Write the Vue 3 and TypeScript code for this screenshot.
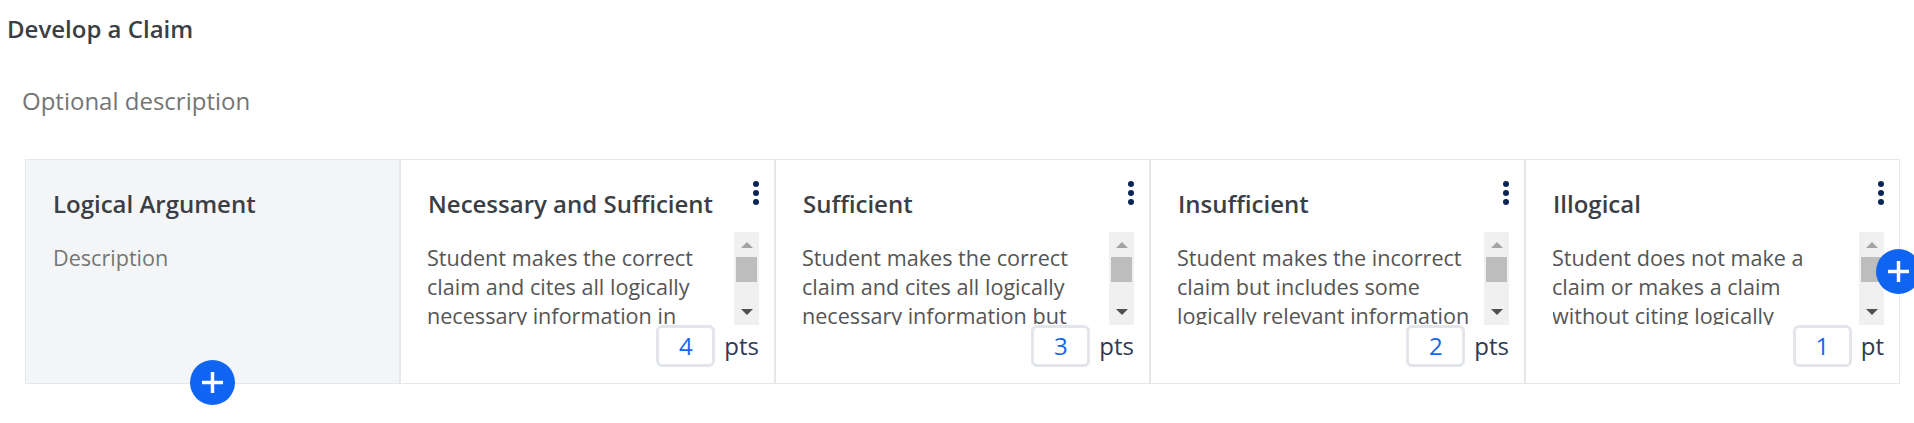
<script setup lang="ts">
interface Level {
  title: string
  text: string
  points: number
  unit: string
}

const levels: Level[] = [
  {
    title: 'Necessary and Sufficient',
    text: 'Student makes the correct claim and cites all logically necessary information in',
    points: 4,
    unit: 'pts',
  },
  {
    title: 'Sufficient',
    text: 'Student makes the correct claim and cites all logically necessary information but',
    points: 3,
    unit: 'pts',
  },
  {
    title: 'Insufficient',
    text: 'Student makes the incorrect claim but includes some logically relevant information',
    points: 2,
    unit: 'pts',
  },
  {
    title: 'Illogical',
    text: 'Student does not make a claim or makes a claim without citing logically',
    points: 1,
    unit: 'pt',
  },
]
</script>

<template>
  <main class="page">
    <h1 class="title">Develop a Claim</h1>
    <p class="optional">Optional description</p>

    <section class="rubric">
      <div class="cell criterion">
        <h2 class="heading">Logical Argument</h2>
        <p class="desc">Description</p>
        <button class="add add-row" type="button" aria-label="Add row">
          <svg viewBox="0 0 24 24" class="plus"><path d="M12 1v22M1 12h22" /></svg>
        </button>
      </div>

      <div v-for="level in levels" :key="level.title" class="cell level">
        <div class="head">
          <h2 class="heading">{{ level.title }}</h2>
          <svg class="kebab" viewBox="0 0 6 24" aria-hidden="true">
            <circle cx="3" cy="3" r="3" />
            <circle cx="3" cy="12" r="3" />
            <circle cx="3" cy="21" r="3" />
          </svg>
        </div>

        <div class="body">
          <p class="text">{{ level.text }}</p>
          <div class="scrollbar" aria-hidden="true">
            <svg class="arrow up" viewBox="0 0 12 6"><path d="M0 6 6 0l6 6z" /></svg>
            <div class="thumb"></div>
            <svg class="arrow down" viewBox="0 0 12 6"><path d="M0 0h12L6 6z" /></svg>
          </div>
        </div>

        <div class="score">
          <div class="points">{{ level.points }}</div>
          <span class="unit">{{ level.unit }}</span>
        </div>
      </div>

      <button class="add add-col" type="button" aria-label="Add column">
        <svg viewBox="0 0 24 24" class="plus"><path d="M12 1v22M1 12h22" /></svg>
      </button>
    </section>
  </main>
</template>

<style scoped>
.page {
  font-family: "Open Sans", "Noto Sans", sans-serif;
  width: 1914px;
  height: 423px;
  overflow: hidden;
  box-sizing: border-box;
  padding: 14px 0 0 7px;
  color: #3b3f45;
}

.title {
  margin: 0;
  font-size: 24px;
  line-height: 30px;
  font-weight: 600;
}

.optional {
  margin: 41px 0 0 15px;
  font-size: 24px;
  line-height: 32px;
  color: #757575;
}

.rubric {
  position: relative;
  display: grid;
  grid-template-columns: repeat(5, 375px);
  margin: 42px 0 0 18px;
  width: 1875px;
}

.cell {
  position: relative;
  box-sizing: border-box;
  height: 225px;
  border: 1px solid #e5e7eb;
}

.criterion {
  background: #f4f5f7;
  padding: 29px 27px 0;
}

.level {
  padding: 15px 15px 0 27px;
}

.head {
  display: flex;
  justify-content: space-between;
  align-items: flex-start;
  height: 57px;
}

.heading {
  margin: 0;
  font-size: 24px;
  line-height: 30px;
  font-weight: 600;
  color: #3b3f45;
}

.level .heading {
  margin-top: 14px;
}

.kebab {
  width: 6px;
  height: 24px;
  margin: 6px 0 0 0;
  fill: #0b2555;
  flex: none;
}

.desc {
  margin: 24px 0 0;
  font-size: 21.6px;
  line-height: 29px;
  color: #757575;
}

.body {
  display: flex;
  justify-content: space-between;
  height: 93px;
  overflow: hidden;
  width: 331px;
}

.text {
  width: 295px;
  margin: 11px 0 0 -1px;
  font-size: 21.6px;
  line-height: 29px;
  color: #555555;
}

.scrollbar {
  flex: none;
  box-sizing: border-box;
  width: 25px;
  height: 93px;
  padding: 10px 2px;
  background: #f0f0f0;
  display: flex;
  flex-direction: column;
  align-items: center;
}

.arrow {
  width: 12px;
  height: 6px;
  flex: none;
}

.arrow.up {
  fill: #a3a3a3;
}

.arrow.down {
  fill: #505050;
  margin-top: 27px;
}

.thumb {
  width: 21px;
  height: 25px;
  margin-top: 9px;
  background: #bdbdbd;
}

.score {
  display: flex;
  justify-content: flex-end;
  align-items: center;
  gap: 9px;
  width: 331px;
}

.points {
  box-sizing: border-box;
  width: 59px;
  height: 42px;
  border: 3px solid #e2e5ea;
  border-radius: 6px;
  background: #fff;
  color: #1565f0;
  font-size: 24px;
  line-height: 36px;
  text-align: center;
}

.unit {
  font-size: 24px;
  line-height: 36px;
  color: #2d3a55;
}

.add {
  position: absolute;
  width: 45px;
  height: 45px;
  padding: 0;
  border: 0;
  border-radius: 50%;
  background: #0f65f2;
  display: flex;
  align-items: center;
  justify-content: center;
}

.add-row {
  left: 164px;
  bottom: -22px;
}

.add-col {
  left: 1851px;
  top: 90px;
}

.plus {
  width: 23px;
  height: 23px;
  fill: none;
  stroke: #fff;
  stroke-width: 3.6;
}
</style>
